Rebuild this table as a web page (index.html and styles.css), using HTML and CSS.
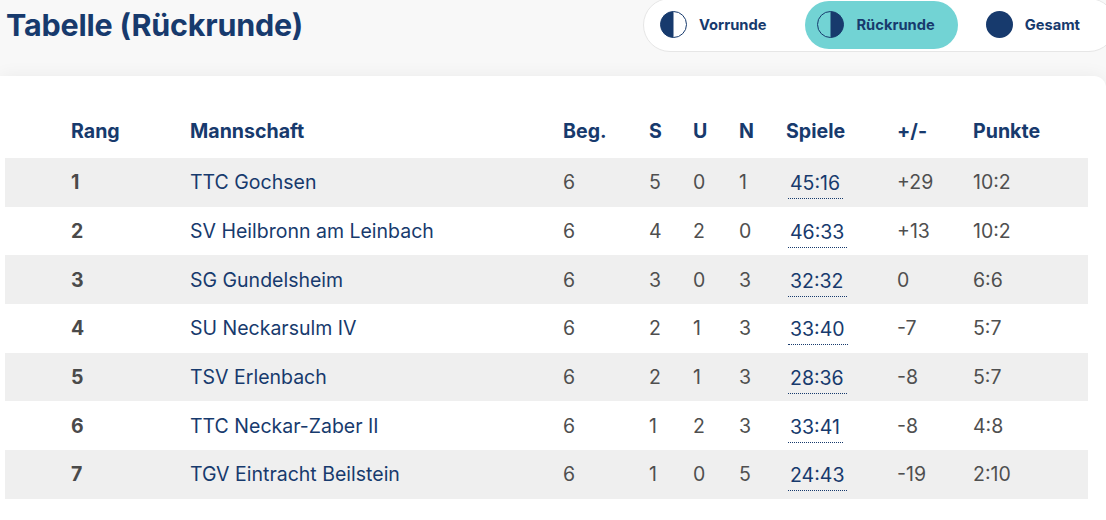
FILE: index.html
```html
<!DOCTYPE html>
<html lang="de">
<head>
<meta charset="utf-8">
<title>Tabelle (Rückrunde)</title>
<link rel="stylesheet" href="styles.css">
</head>
<body>
<header class="top">
  <h1 class="title">Tabelle (Rückrunde)</h1>
  <nav class="switch">
    <button class="seg">
      <svg class="ico" viewBox="0 0 27 27" width="27" height="27"><circle cx="13.5" cy="13.5" r="13" fill="#fff" stroke="#173a6d" stroke-width="1"/><path d="M13.5 0.5 A13 13 0 0 0 13.5 26.5 Z" fill="#173a6d"/></svg>
      <span>Vorrunde</span>
    </button>
    <button class="seg active">
      <svg class="ico" viewBox="0 0 27 27" width="27" height="27"><circle cx="13.5" cy="13.5" r="13" fill="none" stroke="#173a6d" stroke-width="1"/><path d="M13.5 0.5 A13 13 0 0 1 13.5 26.5 Z" fill="#173a6d"/></svg>
      <span>Rückrunde</span>
    </button>
    <button class="seg">
      <svg class="ico" viewBox="0 0 27 27" width="27" height="27"><circle cx="13.5" cy="13.5" r="13.5" fill="#173a6d"/></svg>
      <span>Gesamt</span>
    </button>
  </nav>
</header>
<main class="card">
  <table class="tbl">
    <colgroup>
      <col class="c-rang"><col class="c-team"><col class="c-beg"><col class="c-s"><col class="c-u"><col class="c-n"><col class="c-sp"><col class="c-diff"><col class="c-pkt">
    </colgroup>
    <thead>
      <tr><th class="rang">Rang</th><th>Mannschaft</th><th>Beg.</th><th>S</th><th>U</th><th>N</th><th>Spiele</th><th>+/-</th><th>Punkte</th></tr>
    </thead>
    <tbody>
      <tr><td class="rang">1</td><td class="team">TTC Gochsen</td><td>6</td><td>5</td><td>0</td><td>1</td><td><span class="games">45:16</span></td><td>+29</td><td>10:2</td></tr>
      <tr><td class="rang">2</td><td class="team">SV Heilbronn am Leinbach</td><td>6</td><td>4</td><td>2</td><td>0</td><td><span class="games">46:33</span></td><td>+13</td><td>10:2</td></tr>
      <tr><td class="rang">3</td><td class="team">SG Gundelsheim</td><td>6</td><td>3</td><td>0</td><td>3</td><td><span class="games">32:32</span></td><td>0</td><td>6:6</td></tr>
      <tr><td class="rang">4</td><td class="team">SU Neckarsulm IV</td><td>6</td><td>2</td><td>1</td><td>3</td><td><span class="games">33:40</span></td><td>-7</td><td>5:7</td></tr>
      <tr><td class="rang">5</td><td class="team">TSV Erlenbach</td><td>6</td><td>2</td><td>1</td><td>3</td><td><span class="games">28:36</span></td><td>-8</td><td>5:7</td></tr>
      <tr><td class="rang">6</td><td class="team">TTC Neckar-Zaber II</td><td>6</td><td>1</td><td>2</td><td>3</td><td><span class="games">33:41</span></td><td>-8</td><td>4:8</td></tr>
      <tr><td class="rang">7</td><td class="team">TGV Eintracht Beilstein</td><td>6</td><td>1</td><td>0</td><td>5</td><td><span class="games">24:43</span></td><td>-19</td><td>2:10</td></tr>
    </tbody>
  </table>
</main>
</body>
</html>
```

FILE: styles.css
```css
* { box-sizing: border-box; }

html, body {
  margin: 0;
  padding: 0;
}

body {
  background: #f8f8f8;
  font-family: Inter, "Liberation Sans", sans-serif;
  color: #173a6d;
  overflow: hidden;
}

.top {
  display: flex;
  justify-content: space-between;
  align-items: flex-start;
  height: 76px;
  padding-left: 6px;
}

.title {
  margin: 5px 0 0;
  font-size: 30.5px;
  line-height: 40px;
  font-weight: 700;
  letter-spacing: -0.2px;
  color: #173a6d;
}

.switch {
  display: flex;
  flex: none;
  gap: 16px;
  height: 54px;
  padding: 2px 12px 2px 4px;
  margin: -2.5px -10px 0 0;
  background: #fff;
  border: 1px solid #e6e6e6;
  border-radius: 27px;
}

.seg {
  display: flex;
  align-items: center;
  gap: 12px;
  height: 48px;
  padding: 0 23px 0 12px;
  border: 0;
  border-radius: 24px;
  background: transparent;
  font-family: inherit;
  font-size: 14.7px;
  font-weight: 700;
  color: #173a6d;
  cursor: pointer;
}

.seg.active {
  background: #72d3d4;
}

.ico { display: block; flex: none; }

.card {
  background: #fff;
  border-radius: 0 12px 0 0;
  box-shadow: 0 0 18px rgba(0, 0, 0, 0.06);
  padding: 28px 18px 0 5px;
  min-height: 444px;
}

.tbl {
  border-collapse: collapse;
  table-layout: fixed;
  width: 1083px;
}

.c-rang { width: 185px; }
.c-team { width: 373px; }
.c-beg { width: 86px; }
.c-s { width: 44px; }
.c-u { width: 46px; }
.c-n { width: 47px; }
.c-sp { width: 111px; }
.c-diff { width: 76px; }
.c-pkt { width: 115px; }

.tbl th,
.tbl td {
  padding: 0;
  text-align: left;
  vertical-align: middle;
  white-space: nowrap;
}

.tbl th {
  height: 54px;
  font-size: 19.6px;
  font-weight: 700;
  color: #173a6d;
}

.tbl td {
  height: 48.7px;
  font-size: 19.5px;
  font-weight: 400;
  color: #4f4f4f;
}

.tbl .rang {
  padding-left: 66px;
}

.tbl td.rang {
  font-weight: 700;
  color: #4a4a4a;
}

.tbl td.team {
  color: #173a6d;
}

.tbl tbody tr:nth-child(odd) td {
  background: #efefef;
}

.games {
  display: inline-block;
  margin-left: 2px;
  padding: 0 3px 4px 2px;
  line-height: 22px;
  color: #173a6d;
  border-bottom: 1.5px dotted #173a6d;
  position: relative;
  top: 3px;
}
```
